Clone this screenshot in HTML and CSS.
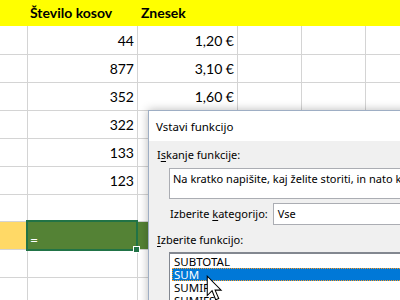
FILE: index.html
```html
<!DOCTYPE html>
<html lang="sl">
<head>
<meta charset="UTF-8">
<title>Vstavi funkcijo</title>
<link rel="stylesheet" href="styles.css">
</head>
<body>
<div class="sheet">
    <div class="row head">
        <div class="cell"></div>
        <div class="cell">Število kosov</div>
        <div class="cell">Znesek</div>
        <div class="cell"></div>
        <div class="cell"></div>
        <div class="cell"></div>
    </div>
    <div class="row">
        <div class="cell"></div>
        <div class="cell num">44</div>
        <div class="cell num">1,20 €</div>
        <div class="cell"></div><div class="cell"></div><div class="cell"></div>
    </div>
    <div class="row">
        <div class="cell"></div>
        <div class="cell num">877</div>
        <div class="cell num">3,10 €</div>
        <div class="cell"></div><div class="cell"></div><div class="cell"></div>
    </div>
    <div class="row">
        <div class="cell"></div>
        <div class="cell num">352</div>
        <div class="cell num">1,60 €</div>
        <div class="cell"></div><div class="cell"></div><div class="cell"></div>
    </div>
    <div class="row">
        <div class="cell"></div>
        <div class="cell num">322</div>
        <div class="cell num"></div>
        <div class="cell"></div><div class="cell"></div><div class="cell"></div>
    </div>
    <div class="row">
        <div class="cell"></div>
        <div class="cell num">133</div>
        <div class="cell num"></div>
        <div class="cell"></div><div class="cell"></div><div class="cell"></div>
    </div>
    <div class="row">
        <div class="cell"></div>
        <div class="cell num">123</div>
        <div class="cell num"></div>
        <div class="cell"></div><div class="cell"></div><div class="cell"></div>
    </div>
    <div class="row">
        <div class="cell"></div><div class="cell"></div><div class="cell"></div>
        <div class="cell"></div><div class="cell"></div><div class="cell"></div>
    </div>
    <div class="row total">
        <div class="cell label-fill"></div>
        <div class="cell active">=<span class="handle"></span></div>
        <div class="cell green"></div>
        <div class="cell"></div><div class="cell"></div><div class="cell"></div>
    </div>
    <div class="row">
        <div class="cell"></div><div class="cell"></div><div class="cell"></div>
        <div class="cell"></div><div class="cell"></div><div class="cell"></div>
    </div>
    <div class="row">
        <div class="cell"></div><div class="cell"></div><div class="cell"></div>
        <div class="cell"></div><div class="cell"></div><div class="cell"></div>
    </div>
</div>

<div class="dialog">
    <div class="dialog-title">Vstavi funkcijo</div>
    <div class="dialog-body">
        <div class="label">I<u>s</u>kanje funkcije:</div>
        <div class="search">Na kratko napišite, kaj želite storiti, in nato kliknite »Pojdi«</div>
        <div class="category">
            <span class="label">Izberite <u>k</u>ategorijo:</span>
            <div class="select">Vse</div>
        </div>
        <div class="label"><u>I</u>zberite funkcijo:</div>
        <ul class="list">
            <li>SUBTOTAL</li>
            <li class="selected">SUM</li>
            <li>SUMIF</li>
            <li>SUMIFS</li>
        </ul>
    </div>
</div>

<svg class="cursor" width="17" height="26" viewBox="0 0 14 21.5">
    <path d="M1 1 L1 17 L5 13 L8 20.5 L10.5 19.5 L7.5 12.5 L12.5 12.5 Z" fill="#fff" stroke="#000" stroke-width="0.85" stroke-linejoin="miter"/>
</svg>
</body>
</html>
```

FILE: styles.css
```css
body {
    margin: 0;
    width: 400px;
    height: 300px;
    overflow: hidden;
    background: #fff;
    font-family: Lato, "Liberation Sans", sans-serif;
}
.sheet {
    display: flex;
    flex-direction: column;
}
.row {
    display: grid;
    grid-template-columns: 28px 110px 100px 64px 64px 64px;
    height: 28px;
}
.cell {
    box-sizing: border-box;
    border-right: 1px solid #d4d4d4;
    border-bottom: 1px solid #d4d4d4;
    font-size: 14px;
    color: #000;
    padding: 0 3px;
    line-height: 27px;
    white-space: nowrap;
    position: relative;
}
.num {
    text-align: right;
    padding-top: 1px;
}
.head {
    height: 26px;
    background: #ffff00;
}
.head .cell {
    border: none;
    font-weight: bold;
    line-height: 26px;
}
.head .cell:nth-child(2) {
    padding-left: 2px;
}
.label-fill {
    background: #ffd966;
}
.active {
    background: #548235;
    color: #fff;
    border: 2px solid #217346;
    margin: -2px 0 -1px -2px;
    width: 112px;
    height: 31px;
    padding: 2px 0 0 2px;
    line-height: 31px;
    z-index: 1;
}
.handle {
    position: absolute;
    right: -4px;
    bottom: -4px;
    width: 5px;
    height: 5px;
    background: #217346;
    border: 1px solid #fff;
}
.green {
    background: #548235;
    border-right: none;
}

.dialog {
    position: absolute;
    left: 148px;
    top: 110px;
    width: 300px;
    height: 220px;
    border: 1px solid #9eaec4;
    background: #f0f0f0;
    box-shadow: 0 0 9px rgba(0, 0, 0, 0.28);
    font-family: "Noto Sans", sans-serif;
    font-size: 11px;
    color: #000;
    z-index: 2;
}
.dialog-title {
    height: 30px;
    line-height: 31px;
    font-size: 11.5px;
    background: #fff;
    padding-left: 7px;
}
.dialog-body {
    padding: 6px 0 0 8px;
}
.label {
    line-height: 16px;
}
.label u {
    text-decoration-thickness: 1px;
    text-underline-offset: 2px;
}
.search {
    margin: 5px 0 0 12px;
    height: 31px;
    box-sizing: border-box;
    border: 1px solid #abadb3;
    background: #fff;
    padding: 2px 3px;
    line-height: 16px;
    white-space: nowrap;
    overflow: hidden;
}
.category {
    display: flex;
    align-items: center;
    margin: 4px 0 0 13px;
    gap: 5px;
}
.select {
    flex: 1;
    height: 22px;
    box-sizing: border-box;
    border: 1px solid #abadb3;
    background: #fff;
    padding-left: 4px;
    line-height: 20px;
}
.category + .label {
    margin-top: 7px;
}
.list {
    list-style: none;
    margin: 4px 0 0 12px;
    padding: 1px 0 0 2px;
    background: #fff;
    border: 1px solid #828790;
    border-top-width: 2px;
}
.list li {
    height: 13px;
    line-height: 13px;
    padding-left: 2px;
    box-sizing: border-box;
    font-size: 11.5px;
}
.list .selected {
    background: #0078d7;
    color: #fff;
    outline: 1px dotted #ff9a1f;
    outline-offset: -1px;
}
.cursor {
    position: absolute;
    left: 206px;
    top: 275px;
    z-index: 3;
}
```
